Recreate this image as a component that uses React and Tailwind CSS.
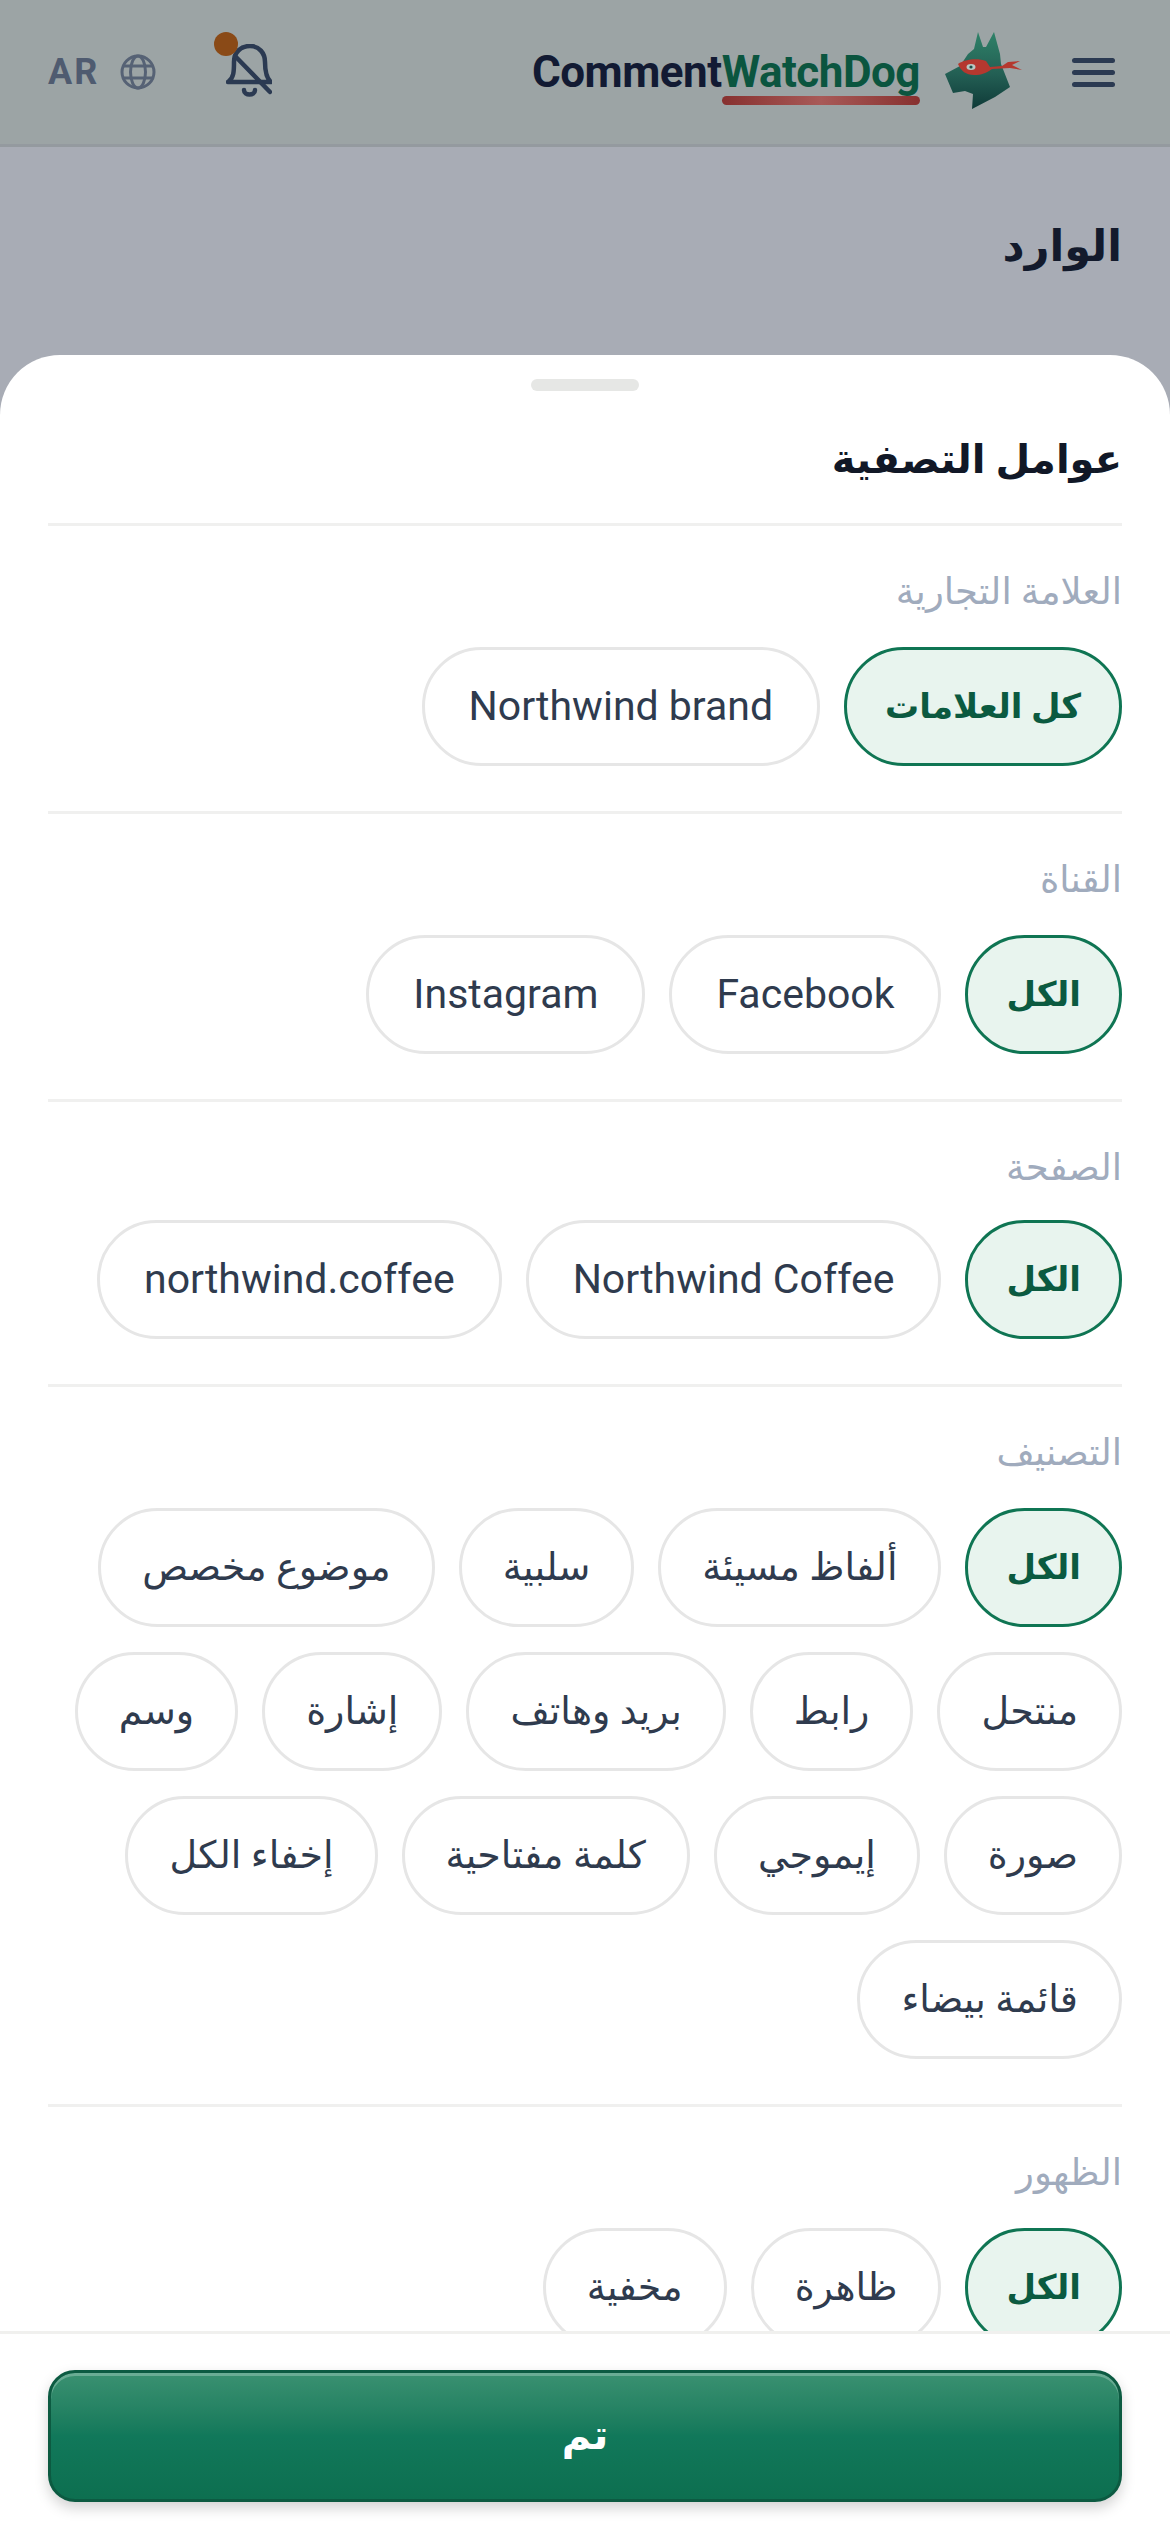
import React from 'react';

const sections = [
  { label: 'العلامة التجارية', gap: 'mb-[30px]', chips: ['كل العلامات', 'Northwind brand'] },
  { label: 'القناة', gap: 'mb-[30px]', chips: ['الكل', 'Facebook', 'Instagram'] },
  { label: 'الصفحة', gap: 'mb-[27px]', chips: ['الكل', 'Northwind Coffee', 'northwind.coffee'] },
  {
    label: 'التصنيف',
    gap: 'mb-[30px]',
    chips: ['الكل', 'ألفاظ مسيئة', 'سلبية', 'موضوع مخصص', 'منتحل', 'رابط', 'بريد وهاتف', 'إشارة', 'وسم', 'صورة', 'إيموجي', 'كلمة مفتاحية', 'إخفاء الكل', 'قائمة بيضاء'],
  },
  { label: 'الظهور', gap: 'mb-[30px]', chips: ['الكل', 'ظاهرة', 'مخفية'] },
];

const DogLogo = () => (
  <svg viewBox="22 20 82 84" className="w-[82px] h-[84px]">
    <defs>
      <linearGradient id="dogFill" x1="0" y1="0" x2="0" y2="1">
        <stop offset="0" stopColor="#2f8268" />
        <stop offset="0.55" stopColor="#235f54" />
        <stop offset="1" stopColor="#0f3a38" />
      </linearGradient>
    </defs>
    <path d="M25 65 L40 57 L48 45 L54 40 L58 23 L63 38 L66 38 L74 23 L80 45 L81 55 L90 78 L75 88 L52 100 L53 85 L45 82 L33 84 Z" fill="url(#dogFill)" />
    <path d="M38 55 C45 50 58 49 66 52 L70 58 L82 57 L88 53 L100 52 L92 56 L102 61 L90 59 L72 60 C66 64 62 66 54 66 C46 66 41 62 38 55 Z" fill="#b5382f" />
    <ellipse cx="51" cy="58" rx="4.5" ry="3" fill="#b9c9c4" />
    <circle cx="51" cy="58" r="1.6" fill="#1d4f47" />
  </svg>
);

const BellSlash = () => (
  <svg viewBox="0 0 46 53" className="w-[46px] h-[53px]" fill="none" stroke="#2b3a52" strokeWidth="4.5" strokeLinecap="round" strokeLinejoin="round">
    <path d="M2 38 C8 34 8 27 8 18 C8 8 15 2 24 2 C33 2 39 9 39 18 C39 27 40 34 45 38 L2 38" />
    <path d="M9 12 L44 48" />
    <path d="M18 46 C18 52 29 52 29 46" />
  </svg>
);

const Globe = () => (
  <svg viewBox="0 0 36 36" className="w-[36px] h-[36px]" fill="none" stroke="#566275" strokeWidth="3">
    <circle cx="18" cy="18" r="16" />
    <ellipse cx="18" cy="18" rx="7.5" ry="16" />
    <path d="M3 12 H33 M3 24 H33" />
  </svg>
);

const Chip = ({ text, active }) => {
  const latin = /^[A-Za-z]/.test(text);
  return (
    <div
      className={`h-[119px] flex items-center rounded-full border-[3px] whitespace-nowrap ${
        latin ? 'px-[44px] text-[41px] font-normal' : active ? 'px-[38px] text-[34px] font-bold' : 'px-[41px] text-[38px] font-medium'
      } ${active ? 'border-[#0f7553] bg-[#e8f4ee] text-[#0b5a40]' : 'border-[#e6e6e6] bg-white text-[#2f3b4e]'}`}
    >
      {text}
    </div>
  );
};

export default function App() {
  return (
    <div
      dir="rtl"
      className="relative h-[2532px] w-[1170px] overflow-hidden bg-[#a8acb5]"
      style={{ fontFamily: 'Roboto, "Noto Sans", "DejaVu Sans", sans-serif' }}
    >
      {/* Header */}
      <header className="h-[147px] flex items-center justify-between pr-[55px] pl-[48px] bg-[#9ca4a5] border-b-[3px] border-[#949a9f]">
        <div className="flex items-center">
          <div className="flex flex-col gap-[7px] w-[43px]">
            <span className="h-[5px] rounded-full bg-[#2b3a52]" />
            <span className="h-[5px] rounded-full bg-[#2b3a52]" />
            <span className="h-[5px] rounded-full bg-[#2b3a52]" />
          </div>
          <div className="mr-[48px] -mt-[2px]">
            <DogLogo />
          </div>
          <div dir="ltr" className="mr-[22px] flex text-[44px] font-bold leading-none tracking-[-0.5px]">
            <span className="text-[#121a33]">Comment</span>
            <span className="relative text-[#0b553f]">
              WatchDog
              <span className="absolute left-0 right-0 top-[46px] h-[9px] rounded-full bg-gradient-to-r from-[#87302f] via-[#a85a58] to-[#87302f]" />
            </span>
          </div>
        </div>
        <div dir="ltr" className="flex items-center">
          <span className="text-[#4f5b70] text-[36px] font-bold tracking-[2px]">AR</span>
          <span className="ml-[21px]"><Globe /></span>
          <span className="relative ml-[70px] -mt-[3px]">
            <BellSlash />
            <span className="absolute -left-[12px] -top-[12px] w-[24px] h-[24px] rounded-full bg-[#8a4a17]" />
          </span>
        </div>
      </header>

      {/* Page title behind the sheet */}
      <h1 className="pr-[48px] pt-[61px] text-[43px] font-bold text-[#131a2c] leading-[76px]">الوارد</h1>

      {/* Filter sheet */}
      <div className="absolute inset-x-0 top-[355px] bottom-0 flex flex-col bg-white rounded-t-[60px] overflow-hidden">
        <div className="flex justify-center pt-[24px]">
          <div className="w-[108px] h-[12px] rounded-full bg-[#e6e7e5]" />
        </div>
        <div className="flex-1 overflow-hidden px-[48px]">
          <h2 className="pt-[36px] pb-[30px] text-[40px] font-bold leading-[66px] text-[#111827] border-b-[3px] border-[#f0f0ef]">
            عوامل التصفية
          </h2>
          {sections.map((section) => (
            <section key={section.label} className="pt-[41px] pb-[45px] border-b-[3px] border-[#f0f0ef]">
              <h3 className={`text-[37px] leading-[50px] font-medium text-[#a0abbd] ${section.gap}`}>{section.label}</h3>
              <div className="flex flex-wrap gap-x-[24px] gap-y-[25px]">
                {section.chips.map((chip, i) => (
                  <Chip key={chip} text={chip} active={i === 0} />
                ))}
              </div>
            </section>
          ))}
        </div>
        {/* Footer */}
        <div className="h-[201px] shrink-0 bg-white border-t-[3px] border-[#f0f0ee] px-[48px] pt-[36px]">
          <button className="w-full h-[132px] rounded-[27px] border-[3px] border-[#0c5a41] bg-gradient-to-b from-[#3a9171] via-[#11785a] to-[#0d6f50] text-white text-[40px] font-bold shadow-[inset_0_3px_0_rgba(255,255,255,0.25),0_6px_14px_rgba(0,0,0,0.18)]">
            تم
          </button>
        </div>
      </div>
    </div>
  );
}
